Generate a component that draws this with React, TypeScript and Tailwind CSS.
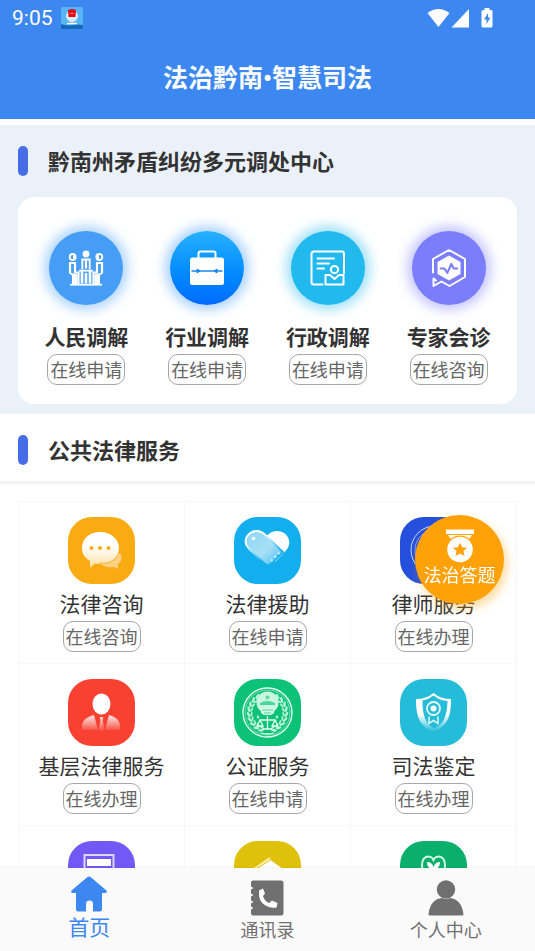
import { type ReactNode } from 'react';

interface Service {
  label: string;
  action?: string;
  icon: ReactNode;
}

/* ---------- mediation icons (white on round badges) ---------- */

const PeopleIcon = () => (
  <svg viewBox="0 0 36 36" className="w-9 h-9" fill="none" stroke="#fff">
    <circle cx="18" cy="4" r="3.400" fill="#fff" stroke="none" />
    <path d="M14.300 19.500V9.500h7.400v10" strokeWidth="1.900" />
    <path d="M18 10v8.500" strokeWidth="2.200" />
    <path d="M11 20.700h14" strokeWidth="1.800" />
    <path d="M14 21v12.500M18 23v10.500M22 21v12.500" strokeWidth="2.600" />
    <circle cx="4.700" cy="7" r="3" strokeWidth="1.800" />
    <circle cx="31.300" cy="7" r="3" strokeWidth="1.800" />
    <path d="M6 4.500v5M30 4.500v5" strokeWidth="2" />
    <path d="M2 23.500V13h5v9.500h3.500V34M34 23.500V13h-5v9.500h-3.500V34" strokeWidth="2.200" />
    <path d="M2 23.500l2.500 2V34H9v-9.500zM34 23.500l-2.500 2V34H27v-9.500z" fill="#fff" />
    <path d="M2 34.700h32" strokeWidth="1.800" />
  </svg>
);

const BriefcaseIcon = () => (
  <svg viewBox="0 0 36 36" className="w-9 h-9">
    <path d="M9.500 8V3.500q0-2 2-2h13q2 0 2 2V8" fill="none" stroke="#fff" strokeWidth="2" />
    <rect x="1" y="7.500" width="34" height="27.500" rx="2.500" fill="#fff" />
    <path d="M2.500 21h31" stroke="#1a86f5" strokeWidth="1.500" />
    <path d="M8 19l3 2-3 2zM28 19l-3 2 3 2z" fill="#1a86f5" stroke="#1a86f5" strokeLinejoin="round" />
  </svg>
);

const CertificateIcon = () => (
  <svg viewBox="0 0 36 36" className="w-9 h-9" fill="none" stroke="#fff" strokeWidth="2" strokeLinejoin="round" strokeLinecap="round">
    <path d="M12.500 34.500H4q-2.500 0-2.500-2.500V4Q1.500 1.500 4 1.500h28.500Q34 1.500 34 4v19" />
    <path d="M7.500 8.500h16.500M7.500 13.500h11.500M7.500 18.500h6.500" />
    <circle cx="24.500" cy="19.500" r="3.600" />
    <path d="M15.500 34.500V25h4.500l4.500 4 4.500-4h4.500v9.500z" />
  </svg>
);

const PulseIcon = () => (
  <svg viewBox="0 0 36 40" className="w-9 h-10" fill="none" stroke="#fff" strokeWidth="2" strokeLinejoin="round" strokeLinecap="round">
    <path d="M2 24.500V11L18 2l16 9v18l-15.500 9-8-4.500-8 4.500v-7.500l2.500 2" />
    <path d="M18 7.500l11.500 6.500v12L18 32.500 6.500 26V14z" fill="#fff" stroke="none" />
    <path d="M9.500 20.500h4l2.800 4.500 4-9 2.500 4.500h3.500" stroke="#7a7dfc" />
  </svg>
);

/* ---------- legal service icons (full rounded tiles) ---------- */

const ChatTile = () => (
  <svg viewBox="0 0 67 67" className="w-full h-full">
    <defs>
      <linearGradient id="bubble" x1="0" y1="0" x2="0" y2="1">
        <stop offset="0.400" stopColor="#fff" />
        <stop offset="1" stopColor="#fddf9f" />
      </linearGradient>
    </defs>
    <rect width="67" height="67" fill="#faab12" />
    <path d="M52 36c3 5 1 9-2 11v5l-4-2c-5 1-11 0-14-4z" fill="#fbd183" />
    <path d="M32 15c11 0 19 7 19 16s-8 16-19 16q-3 0-5-.5l-5 4.500v-7c-5-3-8-7-8-13 0-9 7-16 18-16z" fill="url(#bubble)" />
    <path d="M31 46q13 2 19-8" fill="none" stroke="#faab12" strokeWidth="0.800" />
    <g fill="#faab12">
      <circle cx="23.500" cy="31" r="2" />
      <circle cx="32" cy="31" r="2" />
      <circle cx="40.500" cy="31" r="2" />
    </g>
  </svg>
);

const HeartTile = () => (
  <svg viewBox="0 0 67 67" className="w-full h-full">
    <defs>
      <linearGradient id="band" x1="0" y1="0" x2="1" y2="1">
        <stop offset="0" stopColor="#8bd6f4" />
        <stop offset="0.550" stopColor="#a8e0f6" />
        <stop offset="1" stopColor="#3fbaf0" />
      </linearGradient>
      <linearGradient id="rim" x1="0" y1="0" x2="0.600" y2="1">
        <stop offset="0.300" stopColor="#fff" />
        <stop offset="0.850" stopColor="#12aeee" />
      </linearGradient>
    </defs>
    <rect width="67" height="67" fill="#12aeee" />
    <path d="M33.500 18c5-5 13-5 18-1 5 5 5 12 0 17L41 45 25 28z" fill="#fff" />
    <path d="M14.500 17.500c5-5 12-4.500 17 .5L49 35 37.500 46.500q-3.500 3-7 0L15 32c-4-5-4.500-10.500-.5-14.500z" fill="url(#band)" stroke="url(#rim)" strokeWidth="1.800" />
    <path d="M37 42.500l1.500 1.500M40.500 39l1.500 1.500M44 35.500l1.500 1.500" stroke="#e8f8ff" strokeWidth="1.500" />
    <circle cx="19.500" cy="21.500" r="1.800" fill="#fff" />
  </svg>
);

const LawyerTile = () => (
  <svg viewBox="0 0 67 67" className="w-full h-full">
    <rect width="67" height="67" fill="#2450dd" />
    <g fill="none" stroke="#cbd7ff">
      <circle cx="35" cy="33" r="24" />
      <circle cx="35" cy="33" r="20" strokeWidth="0.600" />
      <path d="M24 26h22M35 20v26M28 46h14M19 36l5-10 5 10zM41 36l5-10 5 10z" />
    </g>
  </svg>
);

const PersonTile = () => (
  <svg viewBox="0 0 67 67" className="w-full h-full">
    <defs>
      <linearGradient id="suit" x1="0" y1="0" x2="0" y2="1">
        <stop offset="0" stopColor="#fff" stopOpacity="0.900" />
        <stop offset="1" stopColor="#fff" stopOpacity="0.050" />
      </linearGradient>
    </defs>
    <rect width="67" height="67" fill="#f94131" />
    <ellipse cx="33.500" cy="25" rx="9" ry="10.500" fill="#fff" />
    <path d="M26 36l4 15H14v-5c1-6 6-8 12-10zM41 36l-4 15h15v-5c-1-6-5-8-11-10zM31.500 38h4l-.8 3 1.300 8v3h-5v-3l1.300-8z" fill="url(#suit)" />
  </svg>
);

const leafAngles = [20, 36, 52, 68, 84, 100, 116, 132, 148];

const EmblemTile = () => (
  <svg viewBox="0 0 67 67" className="w-full h-full">
    <rect width="67" height="67" fill="#0cc277" />
    <circle cx="33.500" cy="33.500" r="24.500" fill="none" stroke="#e6fff3" strokeWidth="1.300" />
    <circle cx="33.500" cy="33.500" r="22.500" fill="none" stroke="#b5f0d4" strokeWidth="0.600" />
    <g fill="#b9f3d8">
      {leafAngles.map((a) => (
        <g key={a}>
          <ellipse cx="33.500" cy="14.500" rx="3" ry="1.300" transform={`rotate(${a + 12} 33.500 33.500) rotate(25 33.500 14.500)`} />
          <ellipse cx="33.500" cy="14.500" rx="3" ry="1.300" transform={`rotate(${-a - 12} 33.500 33.500) rotate(-25 33.500 14.500)`} />
          <ellipse cx="33.500" cy="17.500" rx="2.500" ry="0.900" transform={`rotate(${a + 12} 33.500 33.500) rotate(-20 33.500 17.500)`} />
          <ellipse cx="33.500" cy="17.500" rx="2.500" ry="0.900" transform={`rotate(${-a - 12} 33.500 33.500) rotate(20 33.500 17.500)`} />
        </g>
      ))}
    </g>
    <circle cx="33.500" cy="23.500" r="11" fill="#c9f6e1" />
    <path d="M26 24q7.500-4 15 0v2H26zM33.500 15.500l.8 2h2l-1.600 1.200.6 2-1.800-1.200-1.800 1.200.6-2-1.600-1.200h2z" fill="#4ad69b" />
    <path d="M27 29h13v5l-3 2h-7l-3-2z" fill="#d9f9ea" />
    <path d="M28 31h11M30 34h7" stroke="#4ad69b" />
    <g fill="none" stroke="#e6fff3" strokeWidth="1.300">
      <path d="M33.500 37v13M26 41h15M29 50h9M26 41l-3 6h6zM41 41l-3 6h6zM27 54q6.500 2 13 0" />
    </g>
    <path d="M24 36l1.500 2-1.500 2-1.500-2zM43 36l1.500 2-1.500 2-1.500-2z" fill="#b9f3d8" />
  </svg>
);

const ShieldTile = () => (
  <svg viewBox="0 0 67 67" className="w-full h-full">
    <defs>
      <linearGradient id="shield" x1="0" y1="0" x2="0" y2="1">
        <stop offset="0.550" stopColor="#fff" />
        <stop offset="1" stopColor="#25bcd9" />
      </linearGradient>
    </defs>
    <rect width="67" height="67" fill="#25bcd9" />
    <path d="M33.500 14q7 6 17.500 6c0 17-3 27-17.500 33C19 47 16 37 16 20q10.500 0 17.500-6zm0 2.500q-5 4-11 5c0 13 2 22 11 28C43 46 47 38 47.500 22q-8-.5-14-5.500z" fill="url(#shield)" fillRule="evenodd" />
    <circle cx="33.500" cy="29.500" r="6.500" fill="none" stroke="#e9fbff" strokeWidth="1.800" />
    <circle cx="33.500" cy="29.500" r="3" fill="#fff" />
    <path d="M29 37.500v7l4.500-3 4.500 3v-7" fill="none" stroke="#d5f5fb" strokeWidth="1.600" />
  </svg>
);

const DocumentTile = () => (
  <svg viewBox="0 0 67 67" className="w-full h-full">
    <rect width="67" height="67" fill="#7259f6" />
    <path d="M16.500 52V14h29v38z" fill="none" stroke="#ddd6ff" strokeWidth="2" />
    <rect x="19" y="18" width="24" height="7" fill="#fff" />
    <path d="M20 33h22M20 39h22M20 45h14" stroke="#ddd6ff" strokeWidth="2" />
  </svg>
);

const HouseTile = () => (
  <svg viewBox="0 0 67 67" className="w-full h-full">
    <rect width="67" height="67" fill="#dfc00b" />
    <path d="M35 18l17 12v20H18V30z" fill="#fff" />
    <path d="M17 30l19-13" stroke="#fff1a6" strokeWidth="2" />
    <path d="M20 29.500L36 19" stroke="#dfc00b" />
  </svg>
);

const CloverTile = () => (
  <svg viewBox="0 0 67 67" className="w-full h-full">
    <rect width="67" height="67" fill="#09af6a" />
    <path d="M33.500 44C24 34 20 27 23 19c3-5 9-4 10.500 0 1.500-4 7.500-5 10.500 0 3 8-1 15-10.500 25z" fill="none" stroke="#d3f8e7" strokeWidth="2" />
    <path d="M27 21q5 0 6.500 5 1.500-5 6.500-5 0 6-5 7h-3q-5-1-5-7z" fill="#fff" />
  </svg>
);

const mediationServices: (Service & { badge: string })[] = [
  { label: '人民调解', action: '在线申请', icon: <PeopleIcon />, badge: 'bg-[#459df5] shadow-[0_0_12px_5px_#459df570]' },
  { label: '行业调解', action: '在线申请', icon: <BriefcaseIcon />, badge: 'bg-linear-to-b from-[#26b1ff] to-[#006aff] shadow-[0_0_12px_5px_#3b96ff70]' },
  { label: '行政调解', action: '在线申请', icon: <CertificateIcon />, badge: 'bg-[#22b9ef] shadow-[0_0_12px_5px_#22b9ef70]' },
  { label: '专家会诊', action: '在线咨询', icon: <PulseIcon />, badge: 'bg-[#7a7dfc] shadow-[0_0_12px_5px_#7a7dfc70]' },
];

const legalServices: Service[] = [
  { label: '法律咨询', action: '在线咨询', icon: <ChatTile /> },
  { label: '法律援助', action: '在线申请', icon: <HeartTile /> },
  { label: '律师服务', action: '在线办理', icon: <LawyerTile /> },
  { label: '基层法律服务', action: '在线办理', icon: <PersonTile /> },
  { label: '公证服务', action: '在线申请', icon: <EmblemTile /> },
  { label: '司法鉴定', action: '在线办理', icon: <ShieldTile /> },
];

const moreServices: Service[] = [
  { label: '文书', icon: <DocumentTile /> },
  { label: '房屋', icon: <HouseTile /> },
  { label: '公益', icon: <CloverTile /> },
];

const ActionTag = ({ children }: { children: ReactNode }) => (
  <span className="block rounded-[10px] border border-[#a6a6a6] px-0.5 pt-0.5 text-[18px] leading-[27px] text-[#666]">
    {children}
  </span>
);

const SectionTitle = ({ children }: { children: ReactNode }) => (
  <div className="flex items-center gap-5 px-[18px]">
    <span className="w-2.5 h-[30px] rounded-full bg-[#466ce8]" />
    <h2 className="pt-1 text-[22px] leading-7 font-bold text-[#333]">{children}</h2>
  </div>
);

const StatusBar = () => (
  <div className="flex items-center justify-between h-9 pl-3 pr-10">
    <div className="flex items-center gap-2">
      <span className="text-[21px] leading-6">9:05</span>
      <svg viewBox="0 0 22 22" className="w-[22px] h-[22px]">
        <rect width="22" height="22" rx="1.500" fill="#58b4f5" />
        <path d="M0 17q6 2 11 1t11 0v4H0z" fill="#1769bd" />
        <circle cx="11" cy="9" r="5.500" fill="#d8effc" stroke="#fff" strokeDasharray="1.500 1" />
        <path d="M7 3q4-2 8 0l-.5 7h-7z" fill="#e20c18" />
        <path d="M9.500 6.500h3" stroke="#ff8d55" />
        <path d="M6 16.500h10" stroke="#fff" strokeWidth="1.500" />
      </svg>
    </div>
    <svg viewBox="0 0 68 22" className="w-[68px] h-[22px]" fill="#fff">
      <path d="M.5 6q11-8 22 0l-11 14z" />
      <path d="M42 2v18.500H24.500z" />
      <path d="M57.500 1h5v2H64q1.500 0 1.500 1.500v14.500q0 1.500-1.500 1.500h-8q-1.500 0-1.500-1.500V4.500Q54.500 3 56 3h1.500z" />
      <path d="M61 6l-4 6.500h2.500V17l4-6.500H61z" fill="#3c87f0" />
    </svg>
  </div>
);

const MedalIcon = () => (
  <svg viewBox="0 0 28 34" className="w-7 h-[34px]" fill="#fff">
    <path d="M0 .5h28v4.500H0z" />
    <path d="M2 6h24l-4 6H6z" />
    <circle cx="14" cy="20.500" r="14" fill="#ffa20a" />
    <circle cx="14" cy="20.500" r="12.800" />
    <path d="M14 13.500l2.100 4.700 5.100.5-3.800 3.400 1.100 5-4.500-2.600-4.500 2.600 1.100-5-3.800-3.400 5.100-.5z" fill="#ffa20a" />
  </svg>
);

const HomeIcon = () => (
  <svg viewBox="0 0 36 36" className="w-9 h-9" fill="#3c87f0">
    <path d="M16.500 1q1.500-1 3 0l16 13.500q1 2-1 2.500H31v16q0 2.500-2.500 2.500H22V28q0-3.500-3.500-3.500T15 28v7.500H7.500Q5 35.500 5 33V17H1.500q-2-.5-1-2.500z" />
  </svg>
);

const ContactsIcon = () => (
  <svg viewBox="0 0 36 36" className="w-9 h-9">
    <path d="M4 .5h28q2.500 0 2.500 2.500v30q0 2.500-2.500 2.500H4q-2 0-2-2v-4l2.500-1.500L2 26.500v-3L4.500 22 2 20.500v-4L4.500 15 2 13.500v-4L4.500 8 2 6.500v-4q0-2 2-2z" fill="#707070" />
    <path d="M10 10.500q-1 11 6.500 15 5 3 11 2l1-4.500-5.500-2.500-3 2.500q-5-2.500-6-7l2-2.500-2-5z" fill="#fff" />
  </svg>
);

const UserIcon = () => (
  <svg viewBox="0 0 36 36" className="w-9 h-9" fill="#707070">
    <circle cx="18" cy="9.500" r="9.200" />
    <path d="M.5 34.500C1.500 24 7 18.500 14 18q4 2 8 0c7 .5 12.500 6 13.500 16.500q0 1-1.500 1H2q-1.500 0-1.500-1z" />
  </svg>
);

const tabs = [
  { label: '首页', icon: <HomeIcon />, active: true },
  { label: '通讯录', icon: <ContactsIcon />, active: false },
  { label: '个人中心', icon: <UserIcon />, active: false },
];

function App() {
  return (
    <div className="flex flex-col h-screen bg-white font-[Roboto,'Noto_Sans_CJK_SC',sans-serif]">
      <header className="shrink-0 bg-[#3c87f0] text-white">
        <StatusBar />
        <h1 className="pt-[25px] pb-[22px] text-center text-[25px] leading-9 font-bold">法治黔南•智慧司法</h1>
      </header>

      <main className="flex-1 min-h-0 overflow-y-auto [scrollbar-width:none]">
        {/* Mediation center */}
        <section className="mt-1.5 bg-[#eaf1f8] pt-5 pb-2.5">
          <SectionTitle>黔南州矛盾纠纷多元调处中心</SectionTitle>
          <div className="mx-[18px] mt-5 grid grid-cols-4 rounded-2xl bg-white px-2 pt-[34px] pb-[19px]">
            {mediationServices.map((s) => (
              <button key={s.label} className="flex flex-col items-center">
                <span className={`flex items-center justify-center w-[74px] h-[74px] rounded-full ${s.badge}`}>
                  {s.icon}
                </span>
                <span className="mt-[18px] mb-px text-[21px] leading-[30px] font-bold text-[#333]">{s.label}</span>
                <ActionTag>{s.action}</ActionTag>
              </button>
            ))}
          </div>
        </section>

        {/* Public legal services */}
        <section>
          <div className="border-b-3 border-[#f3f3f3] pt-5 pb-[15px]">
            <SectionTitle>公共法律服务</SectionTitle>
          </div>
          <div className="mx-[18px] mt-[17px] grid grid-cols-3 border-t border-l border-[#f7f7f7]">
            {[...legalServices, ...moreServices].map((s) => (
              <button
                key={s.label}
                aria-label={s.label}
                className="flex flex-col items-center border-r border-b border-[#f7f7f7] pt-[15px] pb-[11px]"
              >
                <span className="w-[67px] h-[67px] overflow-hidden rounded-3xl">{s.icon}</span>
                {s.action && (
                  <>
                    <span className="mt-1.5 mb-px text-[21px] leading-[30px] text-[#333]">{s.label}</span>
                    <ActionTag>{s.action}</ActionTag>
                  </>
                )}
              </button>
            ))}
          </div>
        </section>
      </main>

      {/* Floating quiz entry */}
      <button className="fixed right-[31px] top-[515px] flex flex-col items-center w-[89px] h-[89px] rounded-full bg-[#ffa20a] pt-3.5 text-white shadow-[3px_5px_10px_#ffa20a66]">
        <MedalIcon />
        <span className="pt-px text-[18px] leading-6 whitespace-nowrap">法治答题</span>
      </button>

      <nav className="relative shrink-0 grid grid-cols-3 h-[83px] bg-[#fafafa] shadow-[0_-1px_2px_#0000000d]">
        {tabs.map((tab) => (
          <a key={tab.label} href="#" className={`flex flex-col items-center ${tab.active ? 'pt-2' : 'pt-3'}`}>
            {tab.icon}
            <span className={tab.active ? 'text-[21px] leading-8 text-[#3c87f0]' : 'text-[18px] leading-[30px] text-[#707070]'}>
              {tab.label}
            </span>
          </a>
        ))}
      </nav>
    </div>
  );
}

export default App;
